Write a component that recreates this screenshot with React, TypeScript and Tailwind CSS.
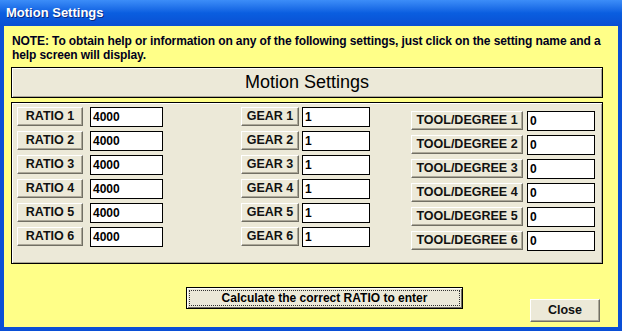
import React from 'react';

const ratios = ['4000', '4000', '4000', '4000', '4000', '4000'];
const gears = ['1', '1', '1', '1', '1', '1'];
const tools = ['0', '0', '0', '0', '0', '0'];

const btn =
  "flex items-center justify-center h-[19px] bg-[#ece9d8] border border-t-white border-l-white border-r-[#716f64] border-b-[#716f64] shadow-[inset_-1px_-1px_0_#aca899] text-[12.5px] font-bold text-[#111] leading-none";

const field =
  "h-[20px] bg-white border border-black px-[2px] text-[12px] font-bold text-black leading-[18px]";

function Row({ label, value, btnW, inW, gap }: { label: string; value: string; btnW: string; inW: string; gap: string }) {
  return (
    <div className={`flex items-start ${gap}`}>
      <div className={`${btn} ${btnW}`}>{label}</div>
      <div className={`${field} ${inW}`}>{value}</div>
    </div>
  );
}

export default function App() {
  return (
    <div
      className="w-[622px] h-[331px] flex flex-col bg-[#0a4fd6] overflow-hidden"
      style={{ fontFamily: '"Liberation Sans", Arial, sans-serif' }}
    >
      {/* title bar */}
      <div className="h-[26px] flex items-center px-[6px] bg-gradient-to-b from-[#3c8df8] via-[#0a5ee0] to-[#0a4fd2]">
        <span className="text-white font-bold text-[13px] [text-shadow:1px_1px_0_#0a2a80]">Motion Settings</span>
      </div>

      {/* body */}
      <div className="mx-[4px] mb-[4px] flex-1 bg-[#ffff88] flex flex-col">
        <p className="pl-[8px] pt-[8px] text-[12px] font-bold leading-[14px] text-[#000020] whitespace-nowrap tracking-[-0.1px]">
          NOTE: To obtain help or information on any of the following settings, just click on the setting name and a
          <br />
          help screen will display.
        </p>

        <div className="ml-[7px] mt-[5px] w-[592px] h-[31px] border border-black bg-[#ece9d8] shadow-[inset_1px_1px_0_#ffffff,inset_-1px_-1px_0_#aca899] flex items-center justify-center">
          <span className="text-[18px] text-black">Motion Settings</span>
        </div>

        <div className="ml-[7px] mt-[4px] w-[592px] h-[162px] border border-black bg-[#ece9d8] shadow-[inset_1px_1px_0_#ffffff,inset_-1px_-1px_0_#aca899] flex items-start pl-[5px] pt-[4px]">
          <div className="flex flex-col gap-[4px]">
            {ratios.map((v, i) => (
              <Row key={i} label={`RATIO ${i + 1}`} value={v} btnW="w-[66px]" inW="w-[73px]" gap="gap-[7px]" />
            ))}
          </div>
          <div className="flex flex-col gap-[4px] ml-[78px]">
            {gears.map((v, i) => (
              <Row key={i} label={`GEAR ${i + 1}`} value={v} btnW="w-[58px]" inW="w-[68px]" gap="gap-[3px]" />
            ))}
          </div>
          <div className="flex flex-col gap-[4px] ml-[41px] mt-[4px]">
            {tools.map((v, i) => (
              <Row key={i} label={`TOOL/DEGREE ${i + 1}`} value={v} btnW="w-[112px]" inW="w-[68px]" gap="gap-[4px]" />
            ))}
          </div>
        </div>

        <div className="flex items-start mt-[23px]">
          <div className="ml-[182px] w-[277px] h-[22px] border border-black bg-[#ece9d8] p-[2px] shadow-[inset_1px_1px_0_#ffffff,inset_-1px_-1px_0_#716f64]">
            <div className="h-full border border-dotted border-[#333] flex items-center justify-center text-[12px] font-bold text-black leading-none">
              Calculate the correct RATIO to enter
            </div>
          </div>
          <div className={`${btn} ml-[67px] mt-[12px] w-[70px] h-[23px]`}>Close</div>
        </div>
      </div>
    </div>
  );
}
